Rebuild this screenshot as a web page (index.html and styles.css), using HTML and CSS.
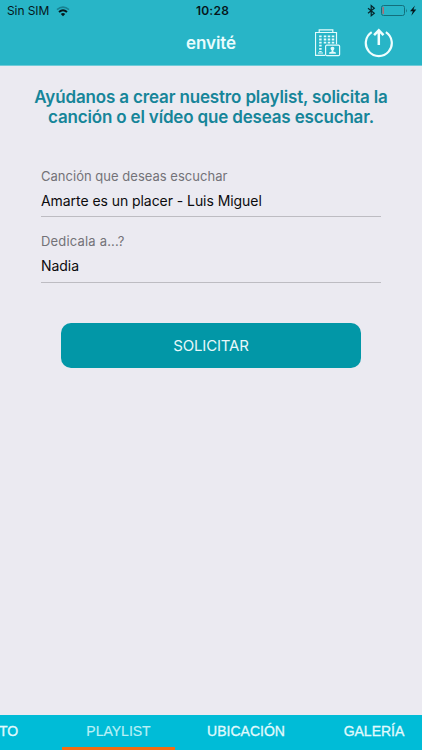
FILE: index.html
```html
<!DOCTYPE html>
<html lang="es">
<head>
<meta charset="utf-8">
<title>envité</title>
<link rel="stylesheet" href="styles.css">
</head>
<body>
<div class="app">
  <header class="top">
    <div class="status">
      <div class="carrier"><span>Sin SIM</span>
        <svg class="wifi" width="14" height="11" viewBox="0 0 14 11"><path d="M1 3.7Q7-1.300 13 3.700" fill="none" stroke="#188191" stroke-width="1.700"/><path d="M3 6Q7 2.400 11 6" fill="none" stroke="#06171b" stroke-width="1.900"/><path d="M4.800 8Q7 6 9.200 8L7 10.300Z" fill="#06171b"/></svg>
      </div>
      <div class="time">10:28</div>
      <div class="power">
        <svg width="50" height="14" viewBox="367 4 50 14"><path d="M368 8.200l6.300 5-3.100 2.600V5.600l3.100 2.600-6.300 5" fill="none" stroke="#06262c" stroke-width="1.200"/><rect x="381.500" y="5.500" width="23" height="10" rx="2" fill="none" stroke="#136f7c"/><path d="M406 8.500q1.500 2 0 4" fill="#136f7c"/><rect x="382.500" y="7" width="1.400" height="7" fill="#b8676d"/><path d="M415 5.500l-5 5.700h2.800l-1.500 4.500 5-6.200h-2.900Z" fill="#04171b"/></svg>
      </div>
    </div>
    <div class="nav">
      <h1>envité</h1>
      <div class="actions">
        <svg width="26" height="28" viewBox="315 29 26 28" fill="none" stroke="#e3fbfc"><path d="M325 55.300h-9.500V32.500h3.700v-2.700h13.600v2.700h3.700v11.800M319 32.500h14" stroke-width="1.200"/><path d="M320.400 35.500v16.500M325 35.500v9M329 35.500v9M333 35.500v9" stroke-width="2.500" stroke-dasharray="1.800 1.300"/><path d="M318 53h5" stroke-width="1"/><rect x="325.600" y="45.100" width="14" height="10.500" rx="1.200" fill="#28b5c7" stroke-width="1.200"/><path d="M332.500 46.800c2.800 0 2 3 .8 3.700v1l2.600 1v1.300h-6.800v-1.300l2.600-1v-1c-1.200-.7-2-3.700.8-3.700Z" fill="#e3fbfc" stroke="none"/></svg>
        <svg class="share" width="30" height="30" viewBox="364 28 30 30" fill="none" stroke="#effefe"><path d="M371.700 32.200a13 13 0 1 0 14.200 0" stroke-width="2.200"/><path d="M378.800 45V30.500m-4.700 4.700 4.700-4.800 4.700 4.800" stroke-width="2.500"/></svg>
      </div>
    </div>
  </header>
  <main>
    <h2><span class="line1">Ayúdanos a crear nuestro playlist, solicita la</span><br><span class="line2">canción o el vídeo que deseas escuchar.</span></h2>
    <form>
      <div class="field"><div class="label song-label">Canción que deseas escuchar</div><div class="value song">Amarte es un placer - Luis Miguel</div></div>
      <div class="field"><div class="label">Dedicala a...?</div><div class="value">Nadia</div></div>
      <button type="button">SOLICITAR</button>
    </form>
  </main>
  <nav class="tabs">
    <div class="tab first"><span>TO</span></div>
    <div class="tab active"><span>PLAYLIST</span></div>
    <div class="tab location"><span>UBICACIÓN</span></div>
    <div class="tab gallery"><span>GALERÍA</span></div>
  </nav>
</div>
</body>
</html>
```
FILE: styles.css
```css
* { box-sizing: border-box; }
body { margin: 0; font-family: Inter, "Liberation Sans", sans-serif; }
.app { width: 422px; height: 750px; display: flex; flex-direction: column; background: #ebeaf1; overflow: hidden; }
.top { height: 66px; background: #28b5c7; border-bottom: 1px solid #70cbd8; flex: none; }
.status { height: 22px; display: grid; grid-template-columns: 1fr 60px 1fr; color: #06171b; font-size: 12px; line-height: 22px; }
.carrier { display: flex; padding-left: 7px; gap: 7px; letter-spacing: -.1px; }
.wifi { margin-top: 6px; }
.time { text-align: center; font-weight: 600; letter-spacing: .25px; padding-left: 3px; }
.power { display: flex; justify-content: flex-end; padding: 4px 5px 0 0; }
.nav { height: 43px; display: grid; grid-template-columns: 1fr 60px 1fr; }
h1 { grid-column: 2; margin: 0; color: #e9fcfd; font-size: 17px; line-height: 43px; font-weight: 600; text-align: center; letter-spacing: -.1px; }
.actions { display: flex; padding: 7px 0 0 74px; }
.share { margin: -1px 0 0 23px; }
main { flex: 1; }
h2 { margin: 21px 0 0; color: #168599; font-size: 17px; line-height: 20px; font-weight: 600; text-align: center; white-space: nowrap; }
.line1 { letter-spacing: -.15px; }
.line2 { letter-spacing: -.17px; }
form { margin: 40px 41px 0; }
.field { height: 66px; border-bottom: 1px solid #bdbcc2; padding-top: 15px; }
.field:first-child { height: 50px; padding-top: 0; }
.label { color: #737278; font-size: 13px; line-height: 18px; letter-spacing: .18px; }
.song-label { letter-spacing: .02px; }
.value { color: #0b0b0e; font-size: 14px; line-height: 20px; margin-top: 6px; letter-spacing: -.06px; }
button { display: block; width: 300px; height: 45px; border: 0; border-radius: 10px; margin: 40px 0 0 20px; padding: 0; background: #0297a7; color: #e7f8fa; font: 15px Inter, sans-serif; letter-spacing: -.15px; }
.tabs { height: 35px; display: grid; grid-template-columns: 62px 113px 142px 105px; background: #00bcd7; color: #e1fafd; font: 14px/32px "Liberation Sans", Arial, sans-serif; flex: none; text-align: center; -webkit-text-stroke: .3px #e1fafd; }
.first { text-align: left; text-indent: -1px; }
.active { border-bottom: 3px solid #f26d13; color: #b9f0f6; -webkit-text-stroke: .2px #b9f0f6; }
.gallery { padding-left: 9px; }
```
